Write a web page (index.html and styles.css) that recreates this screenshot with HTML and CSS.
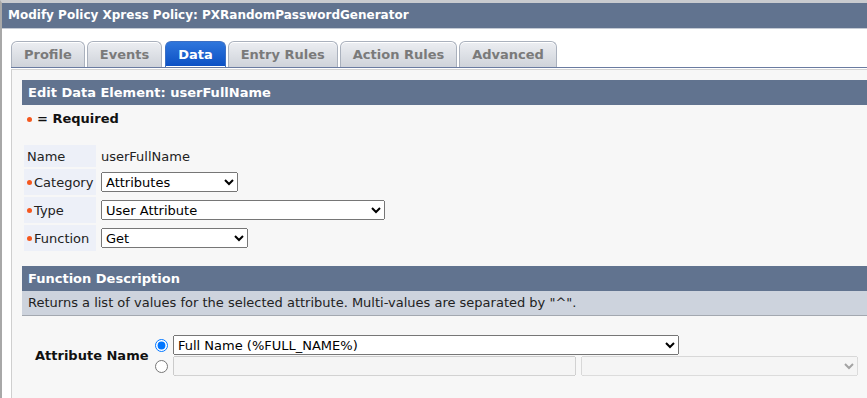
FILE: index.html
```html
<!DOCTYPE html>
<html>
<head>
<meta charset="utf-8">
<link rel="stylesheet" href="styles.css">
</head>
<body>
<div class="frame">
  <div class="title">Modify Policy Xpress Policy: PXRandomPasswordGenerator</div>
  <div class="main">
    <div class="tabs">
      <div class="tab">Profile</div>
      <div class="tab">Events</div>
      <div class="tab active">Data</div>
      <div class="tab">Entry Rules</div>
      <div class="tab">Action Rules</div>
      <div class="tab">Advanced</div>
    </div>
    <div class="panel">
      <div class="bar">Edit Data Element: userFullName</div>
      <div class="required"><span class="dot"></span>= Required</div>
      <div class="form">
        <div class="label">Name</div>
        <div class="value">userFullName</div>
        <div class="label"><span class="dot"></span>Category</div>
        <div class="value"><select class="sel-cat"><option>Attributes</option></select></div>
        <div class="label"><span class="dot"></span>Type</div>
        <div class="value"><select class="sel-type"><option>User Attribute</option></select></div>
        <div class="label"><span class="dot"></span>Function</div>
        <div class="value"><select class="sel-func"><option>Get</option></select></div>
      </div>
      <div class="bar fdesc">Function Description</div>
      <div class="desc">Returns a list of values for the selected attribute. Multi-values are separated by "^".</div>
      <div class="attr">
        <div class="attr-label">Attribute Name</div>
        <div class="attr-opts">
          <div class="opt">
            <input type="radio" name="a" checked>
            <select class="sel-full"><option>Full Name (%FULL_NAME%)</option></select>
          </div>
          <div class="opt">
            <input type="radio" name="a">
            <input type="text" class="txt" disabled>
            <select class="sel-dis" disabled><option></option></select>
          </div>
        </div>
      </div>
    </div>
  </div>
</div>
</body>
</html>
```
FILE: styles.css
```css
html, body {
  margin: 0;
  padding: 0;
  background: #ffffff;
}
body {
  font-family: "DejaVu Sans", Verdana, sans-serif;
  font-size: 13px;
  color: #222222;
  overflow: hidden;
  height: 398px;
}
.frame {
  border-left: 2px solid #a8a8a8;
  border-top: 3px solid #c9cbcf;
  height: 398px;
  box-sizing: border-box;
  overflow: hidden;
}
.title {
  background: #61738f;
  color: #ffffff;
  font-weight: bold;
  font-size: 12px;
  height: 25px;
  line-height: 25px;
  padding-left: 6px;
  border-bottom: 1px solid #c4cad4;
  white-space: nowrap;
}
.main {
  padding: 12px 0 0 9px;
}
.tabs {
  display: flex;
  gap: 2px;
  border-bottom: 1px solid #6a7ba0;
  height: 26px;
}
.tab {
  height: 25px;
  line-height: 25px;
  padding: 0 12px;
  font-weight: bold;
  color: #7a7a7a;
  border: 1px solid #aab1bd;
  border-bottom: none;
  border-radius: 6px 6px 0 0;
  background: linear-gradient(#eceef2, #cfd3da);
  white-space: nowrap;
  box-shadow: inset 0 1px 0 #ffffff;
}
.tab.active {
  background: linear-gradient(#2f76dc, #0a4fc4);
  color: #ffffff;
  border-color: #3b6fc4;
  box-shadow: inset 0 -1px 0 #ffffff;
  margin-left: 1px;
}
.panel {
  margin-top: 1px;
  border-top: 1px solid #d4d4d4;
  border-left: 1px solid #cfcfcf;
  background: #f7f7f7;
  padding: 10px 0 0 10px;
  height: 340px;
}
.bar {
  background: #61738f;
  color: #ffffff;
  font-weight: bold;
  height: 25px;
  line-height: 25px;
  padding-left: 6px;
  white-space: nowrap;
}
.required {
  padding: 6px 0 0 5px;
  line-height: 16px;
  font-weight: bold;
  color: #111111;
  display: flex;
  align-items: center;
}
.dot {
  display: inline-block;
  width: 5px;
  height: 5px;
  border-radius: 50%;
  background: #f5581e;
  margin-right: 2px;
  flex: none;
}
.required .dot {
  margin-right: 5px;
}
.form {
  display: grid;
  grid-template-columns: 72px auto;
  column-gap: 5px;
  row-gap: 2px;
  margin: 18px 0 0 2px;
  grid-auto-rows: 26px;
  grid-template-rows: 22px;
}
.label {
  background: #edf0f8;
  display: flex;
  align-items: center;
  padding-left: 3px;
  color: #222222;
  white-space: nowrap;
}
.value {
  display: flex;
  align-items: center;
  color: #222222;
}
select, input {
  font-family: "DejaVu Sans", Verdana, sans-serif;
  font-size: 13px;
  box-sizing: border-box;
  height: 20px;
  margin: 0;
}
.sel-cat { width: 137px; }
.sel-type { width: 284px; }
.sel-func { width: 147px; }
.fdesc {
  margin-top: 15px;
}
.desc {
  background: #cdd3dd;
  height: 24px;
  line-height: 24px;
  padding-left: 6px;
  border-bottom: 1px solid #a3a8b0;
  white-space: nowrap;
  color: #222222;
}
.attr {
  display: flex;
  align-items: center;
  margin-top: 19px;
  padding-left: 13px;
}
.attr-label {
  font-weight: bold;
  color: #111111;
  width: 120px;
  white-space: nowrap;
}
.attr-opts {
  display: flex;
  flex-direction: column;
  gap: 1px;
}
.opt {
  display: flex;
  align-items: center;
}
.opt input[type=radio] {
  width: 13px;
  height: 13px;
  margin: 0 5px 0 0;
}
.sel-full { width: 506px; }
.txt { width: 403px; margin-right: 5px; }
.sel-dis { width: 277px; }
```
